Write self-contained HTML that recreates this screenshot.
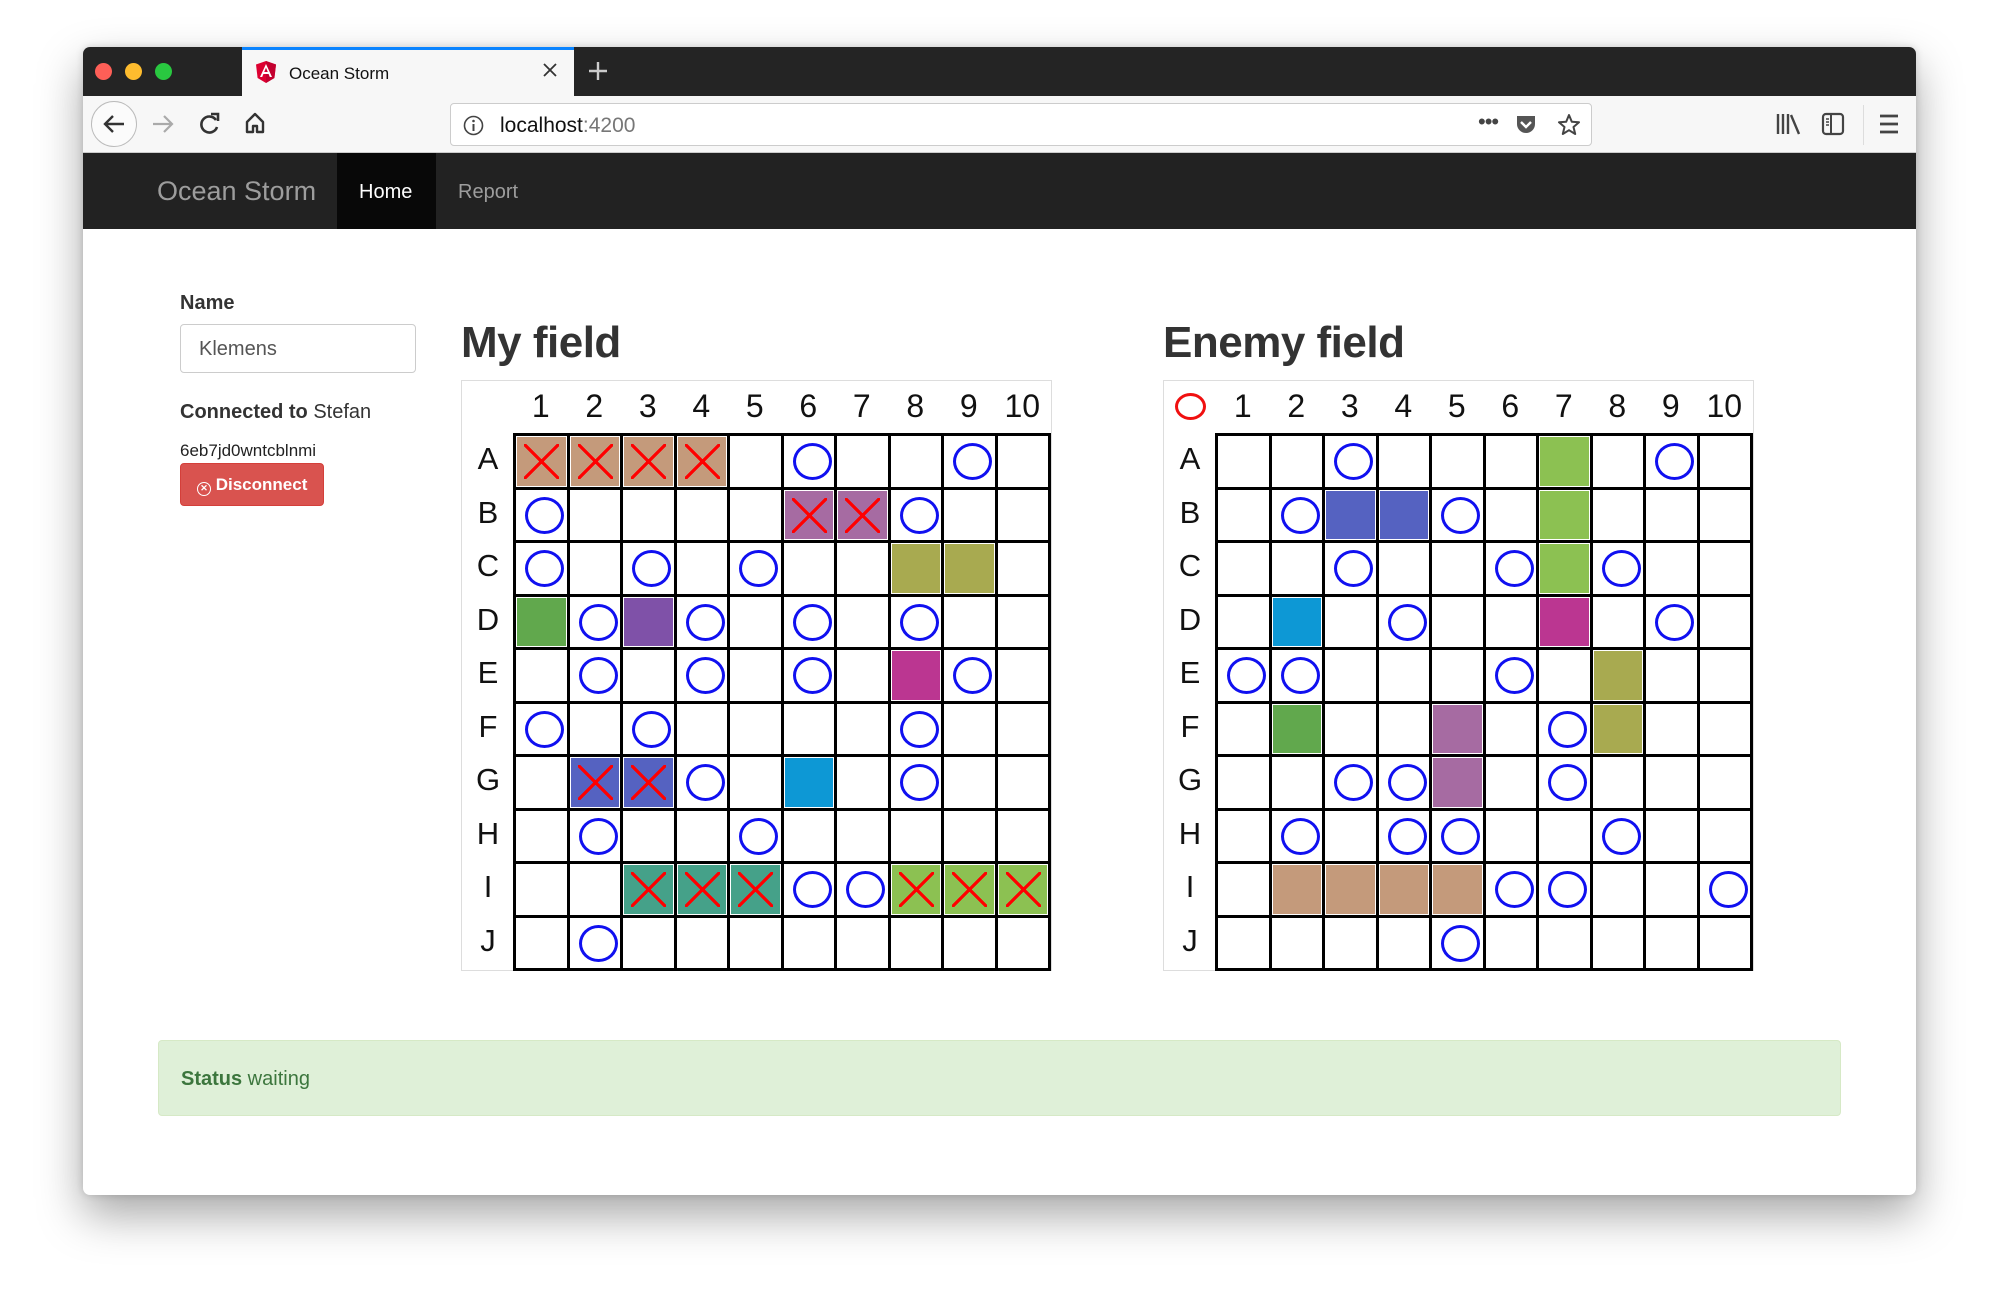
<!DOCTYPE html>
<html><head><meta charset="utf-8">
<style>
*{box-sizing:border-box;margin:0;padding:0}
body{width:1999px;height:1315px;background:#fff;font-family:"Liberation Sans",Arial,sans-serif;position:relative;overflow:hidden}
.win{position:absolute;left:83px;top:47px;width:1833px;height:1148px;background:#fff;border-radius:7px;overflow:hidden;box-shadow:0 20px 45px rgba(0,0,0,.35),0 0 8px rgba(0,0,0,.15)}
.tabbar{position:absolute;left:0;top:0;width:100%;height:49px;background:#242424}
.dot{position:absolute;top:16px;width:17px;height:17px;border-radius:50%}
.tab{position:absolute;left:159px;top:0;width:332px;height:49px;background:#f7f7f7;border-top:3px solid #0a84ff}
.tab .t{position:absolute;left:47px;top:14px;font-size:17px;color:#111}
.toolbar{position:absolute;left:0;top:49px;width:100%;height:57px;background:#f7f7f7;border-bottom:1px solid #ccc}
.url{position:absolute;left:367px;top:7px;width:1142px;height:43px;background:#fff;border:1px solid #ccc;border-radius:4px}
.nav{position:absolute;left:0;top:106px;width:100%;height:76px;background:#222}
.abs{position:absolute}
.field{position:absolute;top:380px;width:591px;height:591px;border:1px solid #ddd;background:#fff}
.hn{position:absolute;top:0;width:53.5px;height:53px;line-height:50px;text-align:center;font-size:32px;color:#111}
.rl{position:absolute;left:0;width:52px;height:53.5px;line-height:50px;text-align:center;font-size:31px;color:#111}
.g{position:absolute;left:51px;top:52px;width:538px;height:538px;background:#000;padding:3px;display:grid;grid-template-columns:repeat(10,50.5px);grid-template-rows:repeat(10,50.5px);gap:3px}
.g div{background:#fff;position:relative}
.g div.c{box-shadow:inset 0 0 0 1px #fff}
.o::after{content:"";position:absolute;left:9px;top:7px;width:33px;height:31px;border:3px solid #1010f0;border-radius:50%}
.x::before{content:"";position:absolute;left:8px;top:8px;width:35px;height:35px;background:linear-gradient(45deg,transparent calc(50% - 1.6px),#f00 calc(50% - 1.6px),#f00 calc(50% + 1.6px),transparent calc(50% + 1.6px)),linear-gradient(-45deg,transparent calc(50% - 1.6px),#f00 calc(50% - 1.6px),#f00 calc(50% + 1.6px),transparent calc(50% + 1.6px))}
.g .tn{background:#c49a7b}.g .pp{background:#a66ba2}.g .ol{background:#a8aa50}.g .gr{background:#61a84d}
.g .pu{background:#7f51a8}.g .mg{background:#bb3691}.g .bl{background:#5562c1}.g .cy{background:#0d98d5}
.g .te{background:#45a189}.g .li{background:#8cc152}
h1{position:absolute;top:318px;font-size:44px;font-weight:bold;color:#333;letter-spacing:-0.5px}
</style></head><body>
<div class="win">
 <div class="tabbar">
  <div class="dot" style="left:12px;background:#fe5f57"></div>
  <div class="dot" style="left:42px;background:#febc2e"></div>
  <div class="dot" style="left:72px;background:#29c840"></div>
  <div class="tab">
   <svg class="abs" style="left:14px;top:11px" width="20" height="22" viewBox="0 0 20 22"><path d="M10 0L0 3.5 1.6 17 10 22 18.4 17 20 3.5z" fill="#dd0031"/><path d="M10 0V22L18.4 17 20 3.5z" fill="#c3002f"/><path d="M10 3L4 16h2.2l1.2-3h5.2l1.2 3H16zM8.2 11L10 6.7 11.8 11z" fill="#fff"/></svg>
   <div class="t">Ocean Storm</div>
   <svg class="abs" style="left:300px;top:12px" width="16" height="16"><path d="M2 2L14 14M14 2L2 14" stroke="#333" stroke-width="1.8"/></svg>
  </div>
  <svg class="abs" style="left:505px;top:14px" width="20" height="20"><path d="M10 1V19M1 10H19" stroke="#ccc" stroke-width="2.4"/></svg>
 </div>
 <div class="toolbar">
  <div class="abs" style="left:8px;top:5px;width:46px;height:46px;border-radius:50%;border:1px solid #bbb;background:#fbfbfb"></div>
  <svg class="abs" style="left:19px;top:17px" width="24" height="22"><path d="M22 11H3M11 3L3 11 11 19" stroke="#333" stroke-width="2.4" fill="none"/></svg>
  <svg class="abs" style="left:68px;top:17px" width="24" height="22"><path d="M2 11H21M13 3L21 11 13 19" stroke="#aaa" stroke-width="2.2" fill="none"/></svg>
  <svg class="abs" style="left:116px;top:16px" width="22" height="24"><path d="M17 8A8 8 0 1 0 18 15" stroke="#333" stroke-width="2.6" fill="none"/><path d="M12 2H19V9" stroke="#333" stroke-width="2.6" fill="none"/></svg>
  <svg class="abs" style="left:161px;top:15px" width="22" height="24"><path d="M3 11L11 3 19 11V21H13V15H9V21H3z" stroke="#333" stroke-width="2.4" fill="none" stroke-linejoin="round"/></svg>
  <div class="url">
   <svg class="abs" style="left:12px;top:11px" width="21" height="21"><circle cx="10.5" cy="10.5" r="9" stroke="#444" stroke-width="1.6" fill="none"/><path d="M10.5 9V16" stroke="#444" stroke-width="2"/><circle cx="10.5" cy="6" r="1.3" fill="#444"/></svg>
   <div class="abs" style="left:49px;top:10px;font-size:21px;color:#111">localhost<span style="color:#777">:4200</span></div>
   <div class="abs" style="left:1027px;top:5px;font-size:22px;color:#444;letter-spacing:-1px">•••</div>
   <svg class="abs" style="left:1064px;top:10px" width="22" height="22"><path d="M2 2H20V10A9 9 0 0 1 2 10z" fill="#555"/><path d="M6 8L11 13 16 8" stroke="#fff" stroke-width="2.4" fill="none"/></svg>
   <svg class="abs" style="left:1106px;top:9px" width="24" height="24"><path d="M12 2L14.8 8.8 22 9.3 16.5 14 18.2 21 12 17.2 5.8 21 7.5 14 2 9.3 9.2 8.8z" stroke="#444" stroke-width="2" fill="none" stroke-linejoin="round"/></svg>
  </div>
  <svg class="abs" style="left:1692px;top:16px" width="26" height="24"><path d="M3 2V22M8 2V22M13 2V22M16 3L24 22" stroke="#444" stroke-width="2.4"/></svg>
  <svg class="abs" style="left:1738px;top:16px" width="24" height="24"><rect x="2" y="2" width="20" height="20" rx="3" stroke="#444" stroke-width="2.2" fill="none"/><path d="M10 2V22" stroke="#444" stroke-width="2"/><path d="M5 7H8M5 10H8M5 13H8" stroke="#444" stroke-width="1.5"/></svg>
  <div class="abs" style="left:1780px;top:9px;width:1px;height:40px;background:#ddd"></div>
  <svg class="abs" style="left:1795px;top:17px" width="22" height="22"><path d="M2 3H20M2 11H20M2 19H20" stroke="#444" stroke-width="2.8"/></svg>
 </div>
 <div class="nav">
  <div class="abs" style="left:74px;top:23px;font-size:27px;color:#9d9d9d">Ocean Storm</div>
  <div class="abs" style="left:254px;top:0;width:99px;height:76px;background:#080808"></div>
  <div class="abs" style="left:276px;top:28px;font-size:20px;color:#fff">Home</div>
  <div class="abs" style="left:375px;top:28px;font-size:20px;color:#9d9d9d">Report</div>
 </div>
</div>

<div class="abs" style="left:180px;top:292px;font-size:20px;font-weight:bold;color:#333">Name</div>
<div class="abs" style="left:180px;top:324px;width:236px;height:49px;border:1px solid #ccc;border-radius:4px;padding:13px 18px;font-size:20px;color:#555">Klemens</div>
<div class="abs" style="left:180px;top:401px;font-size:20px;color:#333"><b>Connected to</b> Stefan</div>
<div class="abs" style="left:180px;top:441px;font-size:17px;color:#222">6eb7jd0wntcblnmi</div>
<div class="abs" style="left:180px;top:463px;width:144px;height:43px;background:#d9534f;border:1px solid #d43f3a;border-radius:4px;color:#fff;font-size:17px;font-weight:bold;padding:11px 0 0 16px"><span style="display:inline-block;width:14px;height:14px;border:1.6px solid #fff;border-radius:50%;font-size:9px;line-height:11px;text-align:center;vertical-align:-1px">✕</span> Disconnect</div>

<h1 style="left:461px">My field</h1>
<h1 style="left:1163px">Enemy field</h1>

<div class="field" style="left:461px">
 <div class="hn" style="left:52px">1</div><div class="hn" style="left:105.5px">2</div><div class="hn" style="left:159px">3</div><div class="hn" style="left:212.5px">4</div><div class="hn" style="left:266px">5</div><div class="hn" style="left:319.5px">6</div><div class="hn" style="left:373px">7</div><div class="hn" style="left:426.5px">8</div><div class="hn" style="left:480px">9</div><div class="hn" style="left:533.5px">10</div>
 <div class="rl" style="top:53px">A</div><div class="rl" style="top:106.5px">B</div><div class="rl" style="top:160px">C</div><div class="rl" style="top:213.5px">D</div><div class="rl" style="top:267px">E</div><div class="rl" style="top:320.5px">F</div><div class="rl" style="top:374px">G</div><div class="rl" style="top:427.5px">H</div><div class="rl" style="top:481px">I</div><div class="rl" style="top:534.5px">J</div>
 <div class="g">
  <div class="c tn x"></div><div class="c tn x"></div><div class="c tn x"></div><div class="c tn x"></div><div></div><div class="o"></div><div></div><div></div><div class="o"></div><div></div>
  <div class="o"></div><div></div><div></div><div></div><div></div><div class="c pp x"></div><div class="c pp x"></div><div class="o"></div><div></div><div></div>
  <div class="o"></div><div></div><div class="o"></div><div></div><div class="o"></div><div></div><div></div><div class="c ol"></div><div class="c ol"></div><div></div>
  <div class="c gr"></div><div class="o"></div><div class="c pu"></div><div class="o"></div><div></div><div class="o"></div><div></div><div class="o"></div><div></div><div></div>
  <div></div><div class="o"></div><div></div><div class="o"></div><div></div><div class="o"></div><div></div><div class="c mg"></div><div class="o"></div><div></div>
  <div class="o"></div><div></div><div class="o"></div><div></div><div></div><div></div><div></div><div class="o"></div><div></div><div></div>
  <div></div><div class="c bl x"></div><div class="c bl x"></div><div class="o"></div><div></div><div class="c cy"></div><div></div><div class="o"></div><div></div><div></div>
  <div></div><div class="o"></div><div></div><div></div><div class="o"></div><div></div><div></div><div></div><div></div><div></div>
  <div></div><div></div><div class="c te x"></div><div class="c te x"></div><div class="c te x"></div><div class="o"></div><div class="o"></div><div class="c li x"></div><div class="c li x"></div><div class="c li x"></div>
  <div></div><div class="o"></div><div></div><div></div><div></div><div></div><div></div><div></div><div></div><div></div>
 </div>
</div>

<div class="field" style="left:1163px">
 <div class="abs" style="left:11px;top:12px;width:31px;height:27px;border:3px solid #f01010;border-radius:50%"></div>
 <div class="hn" style="left:52px">1</div><div class="hn" style="left:105.5px">2</div><div class="hn" style="left:159px">3</div><div class="hn" style="left:212.5px">4</div><div class="hn" style="left:266px">5</div><div class="hn" style="left:319.5px">6</div><div class="hn" style="left:373px">7</div><div class="hn" style="left:426.5px">8</div><div class="hn" style="left:480px">9</div><div class="hn" style="left:533.5px">10</div>
 <div class="rl" style="top:53px">A</div><div class="rl" style="top:106.5px">B</div><div class="rl" style="top:160px">C</div><div class="rl" style="top:213.5px">D</div><div class="rl" style="top:267px">E</div><div class="rl" style="top:320.5px">F</div><div class="rl" style="top:374px">G</div><div class="rl" style="top:427.5px">H</div><div class="rl" style="top:481px">I</div><div class="rl" style="top:534.5px">J</div>
 <div class="g">
  <div></div><div></div><div class="o"></div><div></div><div></div><div></div><div class="c li"></div><div></div><div class="o"></div><div></div>
  <div></div><div class="o"></div><div class="c bl"></div><div class="c bl"></div><div class="o"></div><div></div><div class="c li"></div><div></div><div></div><div></div>
  <div></div><div></div><div class="o"></div><div></div><div></div><div class="o"></div><div class="c li"></div><div class="o"></div><div></div><div></div>
  <div></div><div class="c cy"></div><div></div><div class="o"></div><div></div><div></div><div class="c mg"></div><div></div><div class="o"></div><div></div>
  <div class="o"></div><div class="o"></div><div></div><div></div><div></div><div class="o"></div><div></div><div class="c ol"></div><div></div><div></div>
  <div></div><div class="c gr"></div><div></div><div></div><div class="c pp"></div><div></div><div class="o"></div><div class="c ol"></div><div></div><div></div>
  <div></div><div></div><div class="o"></div><div class="o"></div><div class="c pp"></div><div></div><div class="o"></div><div></div><div></div><div></div>
  <div></div><div class="o"></div><div></div><div class="o"></div><div class="o"></div><div></div><div></div><div class="o"></div><div></div><div></div>
  <div></div><div class="c tn"></div><div class="c tn"></div><div class="c tn"></div><div class="c tn"></div><div class="o"></div><div class="o"></div><div></div><div></div><div class="o"></div>
  <div></div><div></div><div></div><div></div><div class="o"></div><div></div><div></div><div></div><div></div><div></div>
 </div>
</div>

<div class="abs" style="left:158px;top:1040px;width:1683px;height:76px;background:#dff0d8;border:1px solid #d6e9c6;border-radius:4px;padding:27px 0 0 22px;font-size:20px;color:#3c763d"><b>Status</b> waiting</div>
</body></html>
